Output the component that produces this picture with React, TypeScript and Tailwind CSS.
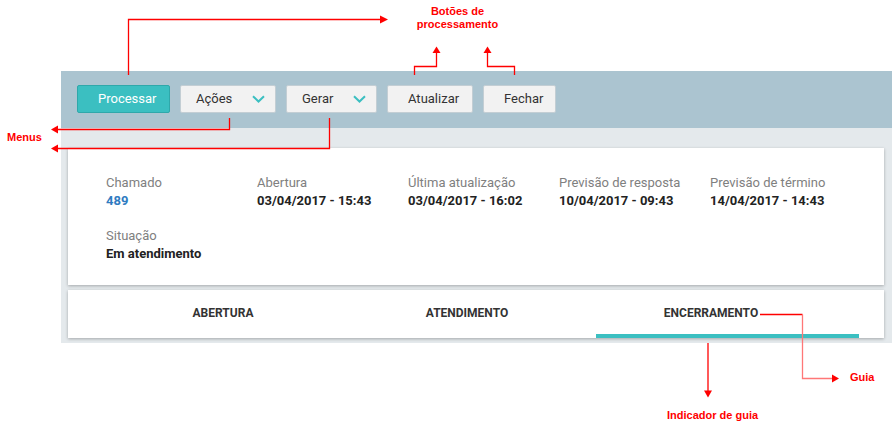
const buttons = [
  { label: "Atualizar", w: "w-[86px]" },
  { label: "Fechar", w: "w-[73px]" },
];

const fields = [
  { label: "Chamado", value: "489", link: true },
  { label: "Abertura", value: "03/04/2017 - 15:43" },
  { label: "Última atualização", value: "03/04/2017 - 16:02" },
  { label: "Previsão de resposta", value: "10/04/2017 - 09:43" },
  { label: "Previsão de término", value: "14/04/2017 - 14:43" },
  { label: "Situação", value: "Em atendimento" },
];

const tabs = ["ABERTURA", "ATENDIMENTO", "ENCERRAMENTO"];

const Chevron = () => (
  <svg width="13" height="8" viewBox="0 0 13 8" className="shrink-0">
    <path d="M1 1.2 6.5 6.5 12 1.2" fill="none" stroke="#3bbfc1" strokeWidth="2" />
  </svg>
);

const MenuButton = ({ label, w }: { label: string; w: string }) => (
  <button
    className={`${w} h-[28px] flex items-center justify-between pl-[15px] pr-[10px] rounded-[2px] border border-[#c3ced4] bg-[#f2f2f2] text-[13px] text-[#333]`}
  >
    {label}
    <Chevron />
  </button>
);

const Annotations = () => (
  <svg className="absolute inset-0 z-10 pointer-events-none" width="894" height="433" viewBox="0 0 894 433">
    <g fill="none" stroke="#f00" strokeWidth="1.3">
      {/* processamento */}
      <path d="M128.5 75V19.5H381" />
      <path d="M414.5 75V66.5H436.5V52" />
      <path d="M514.5 75V66.5H487.5V52" />
      {/* menus */}
      <path d="M229.5 118V129.5H57" />
      <path d="M329.5 118V148.5H57" />
      {/* guia */}
      <path d="M760 314.5H802.5" />
    </g>
    <g fill="none" stroke="#f77" strokeWidth="1.3">
      <path d="M802.5 314.5V378.5H833" />
    </g>
    <path d="M708 343V391" stroke="#f00" strokeWidth="1.3" />
    <g fill="#f00">
      <polygon points="380,15.5 388,19.5 380,23.5" />
      <polygon points="432.5,53 436.5,46.5 440.5,53" />
      <polygon points="483.5,53 487.5,46.5 491.5,53" />
      <polygon points="58,125.5 51,129.5 58,133.5" />
      <polygon points="58,144.5 51,148.5 58,152.5" />
      <polygon points="832,374.5 839,378.5 832,382.5" />
      <polygon points="704,390.5 708,397.5 712,390.5" />
    </g>
  </svg>
);

export default function App() {
  return (
    <div className="relative w-[894px] h-[433px] bg-white overflow-hidden font-['Roboto','Liberation_Sans',sans-serif]">
      <Annotations />

      {/* callout labels */}
      <div className="absolute z-10 left-[407px] top-[5px] w-[101px] text-center text-[11px] leading-[13px] font-bold text-[#f00] font-['Liberation_Sans',sans-serif]">
        Botões de
        <br />
        processamento
      </div>
      <div className="absolute z-10 left-[7px] top-[131px] text-[11px] leading-[13px] font-bold text-[#f00] font-['Liberation_Sans',sans-serif]">
        Menus
      </div>
      <div className="absolute z-10 left-[850px] top-[371px] text-[11px] leading-[13px] font-bold text-[#f00] font-['Liberation_Sans',sans-serif]">
        Guia
      </div>
      <div className="absolute z-10 left-[667px] top-[409px] text-[11px] leading-[13px] font-bold text-[#f00] font-['Liberation_Sans',sans-serif]">
        Indicador de guia
      </div>

      <div className="ml-[61px] mt-[71px] w-[831px]">
        {/* toolbar */}
        <div className="h-[57px] bg-[#abc4d0] pl-[16px] pt-[14px] flex gap-[10px]">
          <button className="w-[93px] h-[28px] pl-[20px] text-left rounded-[2px] border border-[#2fa8aa] bg-[#3bbfc1] text-[13px] text-white">
            Processar
          </button>
          <MenuButton label="Ações" w="w-[96px]" />
          <MenuButton label="Gerar" w="w-[91px]" />
          {buttons.map((b) => (
            <button
              key={b.label}
              className={`${b.w} h-[28px] pl-[20px] text-left rounded-[2px] border border-[#c3ced4] bg-[#f2f2f2] text-[13px] text-[#333]`}
            >
              {b.label}
            </button>
          ))}
        </div>

        {/* content */}
        <div className="bg-[#e4e9ec] pt-[20px] pl-[7px] pr-[8px] pb-[5px]">
          <div className="h-[137px] bg-white pt-[27px] pl-[38px] shadow-[0_1px_3px_rgba(0,0,0,0.28)]">
            <div className="grid grid-cols-[repeat(5,151px)] gap-y-[19px]">
              {fields.map((f) => (
                <div key={f.label}>
                  <div className="text-[13px] leading-4 text-[#808080]">{f.label}</div>
                  <div
                    className={`mt-[2px] text-[13px] leading-4 font-bold ${f.link ? "text-[#2f7bc1]" : "text-[#222]"}`}
                  >
                    {f.value}
                  </div>
                </div>
              ))}
            </div>
          </div>

          <div className="mt-[5px] h-[48px] bg-white shadow-[0_1px_3px_rgba(0,0,0,0.28)]">
            <div className="flex pl-[33px] pt-[15px]">
              {tabs.map((t) => (
                <div key={t} className="w-[244px] text-center text-[12px] leading-4 font-bold text-[#333]">
                  {t}
                </div>
              ))}
            </div>
            <div className="mt-[13px] ml-[528px] w-[263px] h-[4px] bg-[#3bbfc1]" />
          </div>
        </div>
      </div>
    </div>
  );
}
